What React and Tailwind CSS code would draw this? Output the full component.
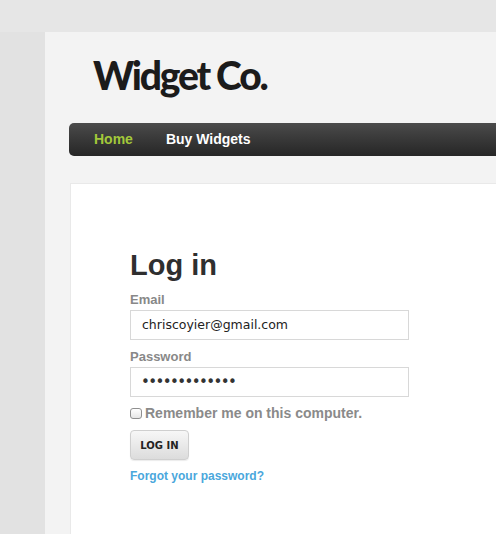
export default function App() {
  return (
    <div className="h-[534px] w-[496px] overflow-hidden bg-[#e6e6e6] pt-[32px]">
      <div className="flex h-full">
        <div className="w-[45px] shrink-0 bg-[#e2e2e2]" />
        <div className="flex-1 bg-[#f3f3f3] pl-[24px] pt-[24px]">
          <div
            className="ml-[24px] h-[39px] text-[39px] leading-none font-black tracking-[-2.2px] text-[#1b1b1b]"
            style={{ fontFamily: "Lato, 'Open Sans', sans-serif" }}
          >
            Widget Co.
          </div>
          <nav
            className="mt-[28px] flex h-[33px] items-center rounded-l-[5px] bg-gradient-to-b from-[#4b4b4b] to-[#262626] pl-[25px] text-[14px] font-bold"
            style={{ fontFamily: "'Liberation Sans', Arial, sans-serif" }}
          >
            <span className="text-[#a3c93a]">Home</span>
            <span className="ml-[33px] text-white">Buy Widgets</span>
          </nav>
          <div
            className="ml-[1px] mt-[27px] h-[400px] border-t border-l border-[#e9e9e9] bg-white pl-[59px] pt-[67px]"
            style={{ fontFamily: "'Liberation Sans', Arial, sans-serif" }}
          >
            <h1 className="text-[29px] leading-none font-bold text-[#2f2f2f]">Log in</h1>
            <div className="mt-[13px] text-[13px] leading-none font-bold text-[#888888]">Email</div>
            <div
              className="mt-[4px] flex h-[30px] w-[279px] items-center border border-[#d8d8d8] pl-[11px] text-[12.5px] text-[#222]"
              style={{ fontFamily: "'DejaVu Sans', Verdana, sans-serif" }}
            >
              chriscoyier@gmail.com
            </div>
            <div className="mt-[10px] text-[13px] leading-none font-bold text-[#888888]">Password</div>
            <div
              className="mt-[4px] flex h-[30px] w-[279px] items-center border border-[#d8d8d8] pl-[10px] text-[15px] tracking-[-1.6px] text-[#333]"
              style={{ fontFamily: "'DejaVu Sans', Verdana, sans-serif" }}
            >
              •••••••••••••
            </div>
            <div className="mt-[9px] flex items-center text-[14px] leading-none font-bold text-[#8a8a8a]">
              <span className="mr-[3px] inline-block h-[11px] w-[12px] rounded-[3px] border border-[#8f8f8f] bg-gradient-to-b from-white to-[#e6e6e6]" />
              Remember me on this computer.
            </div>
            <button
              className="mt-[10px] flex h-[30px] w-[59px] items-center justify-center rounded-[4px] border border-[#cfcfcf] bg-gradient-to-b from-[#f7f7f7] to-[#dcdcdc] text-[10px] font-bold text-[#222] shadow-[0_1px_1px_rgba(0,0,0,0.08)]"
              style={{ fontFamily: "'DejaVu Sans', Verdana, sans-serif" }}
            >
              LOG IN
            </button>
            <div className="mt-[10px] text-[12px] leading-none font-bold text-[#4aa7dc]">
              Forgot your password?
            </div>
          </div>
        </div>
      </div>
    </div>
  );
}
